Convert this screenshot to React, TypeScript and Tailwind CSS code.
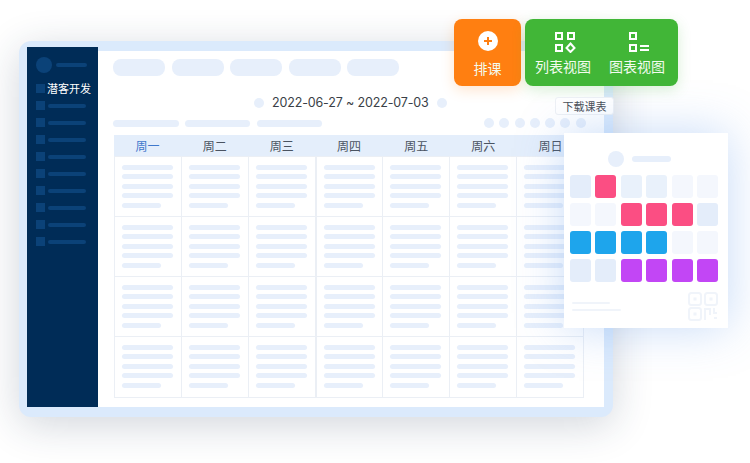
const TABS = ["w-[52px]", "w-[52px]", "w-[52px]", "w-[52px]", "w-[52px]"];
const DAYS = ["周一", "周二", "周三", "周四", "周五", "周六", "周日"];
const DOTS = [0, 1, 2, 3, 4, 5, 6];
const ROWS = ["h-[61px]", "h-[60px]", "h-[60px]", "h-[61px]"];

const CARD_COLORS = [
  ["bg-[#e4edfa]", "bg-[#fb4e83]", "bg-[#e9f1fb]", "bg-[#e9f1fb]", "bg-[#f4f7fd]", "bg-[#f4f7fd]"],
  ["bg-[#f4f7fd]", "bg-[#f4f7fd]", "bg-[#fb4e83]", "bg-[#fb4e83]", "bg-[#fb4e83]", "bg-[#e4edfa]"],
  ["bg-[#1ea5ec]", "bg-[#1ea5ec]", "bg-[#1ea5ec]", "bg-[#1ea5ec]", "bg-[#f4f7fd]", "bg-[#f4f7fd]"],
  ["bg-[#e4edfa]", "bg-[#e4edfa]", "bg-[#c246f5]", "bg-[#c246f5]", "bg-[#c246f5]", "bg-[#c246f5]"],
];

function Sidebar() {
  return (
    <div className="w-[71px] shrink-0 bg-[#002c57] pl-[9px] pt-[10px]">
      <div className="flex items-center gap-[4px] h-[16px]">
        <span className="w-[16px] h-[16px] rounded-full bg-[#0b4278]" />
        <span className="w-[31px] h-[4px] rounded-full bg-[#0b4278]" />
      </div>
      <div className="flex items-center gap-[2px] h-[17px] mt-[7px]">
        <span className="w-[9px] h-[9px] bg-[#0b4278]" />
        <span className="text-[11px] leading-[17px] text-white whitespace-nowrap">潜客开发</span>
      </div>
      {[0, 1, 2, 3, 4, 5, 6, 7, 8].map((i) => (
        <div key={i} className="flex items-center gap-[3px] h-[17px]">
          <span className="w-[9px] h-[9px] bg-[#0b4278]" />
          <span className="w-[38px] h-[4px] rounded-full bg-[#0b4278]" />
        </div>
      ))}
    </div>
  );
}

function Cell({ thick }: { thick: boolean }) {
  return (
    <div className={"border-b border-[#ebeff5] pl-[7px] pt-[8px] flex flex-col gap-[4.4px] " + (thick ? "border-l-2 border-l-[#ebeff5]" : "border-l")}>
      <span className="w-[51px] h-[5px] rounded-full bg-[#e7effb]" />
      <span className="w-[51px] h-[5px] rounded-full bg-[#e7effb]" />
      <span className="w-[51px] h-[5px] rounded-full bg-[#e7effb]" />
      <span className="w-[51px] h-[5px] rounded-full bg-[#e7effb]" />
      <span className="w-[39px] h-[5px] rounded-full bg-[#e7effb]" />
    </div>
  );
}

function Schedule() {
  return (
    <div className="w-[470px] ml-[1px] mt-[7px]">
      <div className="grid grid-cols-7 h-[21px] bg-[#e4eefb]">
        {DAYS.map((d, i) => (
          <span key={d} className={"text-center text-[12px] leading-[21px] " + (i === 0 ? "text-[#3f78cc]" : "text-[#4a5361]")}>
            {d}
          </span>
        ))}
      </div>
      {ROWS.map((h, r) => (
        <div key={r} className={"grid grid-cols-7 border-r border-[#ebeff5] " + h + (r === 0 ? " border-t border-t-[#ebeff5]" : "")}>
          {DOTS.map((c) => (
            <Cell key={c} thick={c === 3} />
          ))}
        </div>
      ))}
    </div>
  );
}

function Panel() {
  return (
    <div className="flex-1 mt-[4px] bg-white pl-[15px] pt-[8px]">
      <div className="flex gap-[6.5px]">
        {TABS.map((w, i) => (
          <span key={i} className={w + " h-[17px] rounded-lg bg-[#e7effb]"} />
        ))}
      </div>
      <div className="flex items-center mt-[19px] h-[16px] pl-[141px]">
        <span className="w-[10px] h-[10px] rounded-full bg-[#e7effb]" />
        <span className="ml-[8px] text-[12.5px] leading-[16px] text-[#3a3f47] font-['Inter',sans-serif] tracking-[-0.15px] whitespace-nowrap">
          2022-06-27 ~ 2022-07-03
        </span>
        <span className="ml-[8px] w-[10px] h-[10px] rounded-full bg-[#e7effb]" />
      </div>
      <div className="flex items-center mt-[7px] h-[10px]">
        <span className="w-[66px] h-[7px] rounded-full bg-[#e7effb]" />
        <span className="ml-[6px] w-[65px] h-[7px] rounded-full bg-[#e7effb]" />
        <span className="ml-[7px] w-[65px] h-[7px] rounded-full bg-[#e7effb]" />
        <div className="ml-[162px] flex gap-[5.3px]">
          {DOTS.map((i) => (
            <span key={i} className="w-[10px] h-[10px] rounded-full bg-[#e7effb]" />
          ))}
        </div>
      </div>
      <Schedule />
    </div>
  );
}

function ListIcon() {
  return (
    <svg className="ml-[4px]" width="22" height="22" viewBox="0 0 22 22" fill="none" stroke="#fff" strokeWidth="2">
      <rect x="2" y="2" width="6" height="6" />
      <rect x="14" y="2" width="6" height="6" />
      <rect x="2" y="14" width="6" height="6" />
      <path d="M16.5 12.5 20.5 17 16.5 21 12.5 17Z" />
    </svg>
  );
}

function ChartIcon() {
  return (
    <svg className="ml-[4px]" width="22" height="22" viewBox="0 0 22 22" fill="none" stroke="#fff" strokeWidth="2">
      <rect x="2" y="2" width="6" height="6" />
      <rect x="2" y="14" width="6" height="6" />
      <path d="M12 15H21M12 19H21" />
    </svg>
  );
}

function Actions() {
  return (
    <div className="absolute left-[454px] top-[19px] flex gap-[4px] text-[14px] leading-[20px] text-[#f3fbef]">
      <div className="w-[67px] h-[67px] rounded-lg bg-[#ff7f11] shadow-[0_4px_14px_rgba(255,127,17,0.2)] flex flex-col items-center pt-[12px]">
        <span className="w-[20px] h-[20px] rounded-full bg-white flex items-center justify-center">
          <svg width="10" height="10" viewBox="0 0 10 10" stroke="#ff7f11" strokeWidth="2">
            <path d="M5 1V9M1 5H9" />
          </svg>
        </span>
        <span className="mt-[7px]">排课</span>
      </div>
      <div className="w-[153px] h-[67px] rounded-lg bg-[#41b637] shadow-[0_4px_14px_rgba(65,182,55,0.2)] flex pt-[12px] pl-[10px] gap-[18px]">
        <div className="w-[56px] flex flex-col items-center">
          <ListIcon />
          <span className="mt-[3px] whitespace-nowrap">列表视图</span>
        </div>
        <div className="w-[56px] flex flex-col items-center">
          <ChartIcon />
          <span className="mt-[3px] whitespace-nowrap">图表视图</span>
        </div>
      </div>
    </div>
  );
}

function QrMark() {
  return (
    <svg width="30" height="29" viewBox="0 0 30 29" fill="none" stroke="#f0f4fa" strokeWidth="2">
      <rect x="1" y="1" width="12" height="12" rx="2.5" />
      <rect x="17" y="1" width="12" height="12" rx="2.5" />
      <rect x="1" y="16" width="12" height="12" rx="2.5" />
      <rect x="5.5" y="5.5" width="3" height="3" fill="#f0f4fa" stroke="none" />
      <rect x="21.5" y="5.5" width="3" height="3" fill="#f0f4fa" stroke="none" />
      <rect x="5.5" y="20.5" width="3" height="3" fill="#f0f4fa" stroke="none" />
      <path d="M17 28V17H22V23M26 16V21H29M26 26H29" />
    </svg>
  );
}

function ShareCard() {
  return (
    <div className="absolute left-[564px] top-[133px] w-[164px] h-[195px] bg-white shadow-[0_0_44px_rgba(90,150,235,0.34)] px-[6px]">
      <div className="flex items-center h-[16px] mt-[18px] pl-[38px]">
        <span className="w-[16px] h-[16px] rounded-full bg-[#e7effb]" />
        <span className="ml-[8px] w-[39px] h-[6px] rounded-full bg-[#e7effb]" />
      </div>
      <div className="mt-[8px] flex flex-col gap-[5px]">
        {CARD_COLORS.map((row, r) => (
          <div key={r} className="flex gap-[4.4px]">
            {row.map((c, i) => (
              <span key={i} className={"w-[21px] h-[23px] rounded-[3px] " + c} />
            ))}
          </div>
        ))}
      </div>
      <div className="flex justify-between mt-[10px] pl-[2px] pr-[4px]">
        <div className="pt-[10px]">
          <div className="w-[38px] h-[2px] rounded-full bg-[#f0f4fa]" />
          <div className="w-[49px] h-[2px] mt-[5px] rounded-full bg-[#f0f4fa]" />
        </div>
        <QrMark />
      </div>
    </div>
  );
}

export default function App() {
  return (
    <div className="relative w-[750px] h-[463px] overflow-hidden bg-white font-['Noto_Sans_CJK_SC',sans-serif]">
      <div className="pt-[41px] pl-[19px]">
        {/* main window */}
        <div className="flex w-[594px] h-[376px] rounded-xl bg-[#dbeafc] pl-[8px] pr-[9px] pt-[6px] pb-[10px] shadow-[0_8px_40px_rgba(30,50,80,0.2)]">
          <Sidebar />
          <Panel />
        </div>
      </div>
      <Actions />
      <span className="absolute left-[555px] top-[97px] w-[59px] h-[18px] rounded-[3px] bg-white border border-[#eef1f5] text-center text-[11px] leading-[16px] text-[#4a4f57]">
        下载课表
      </span>
      <ShareCard />
    </div>
  );
}
